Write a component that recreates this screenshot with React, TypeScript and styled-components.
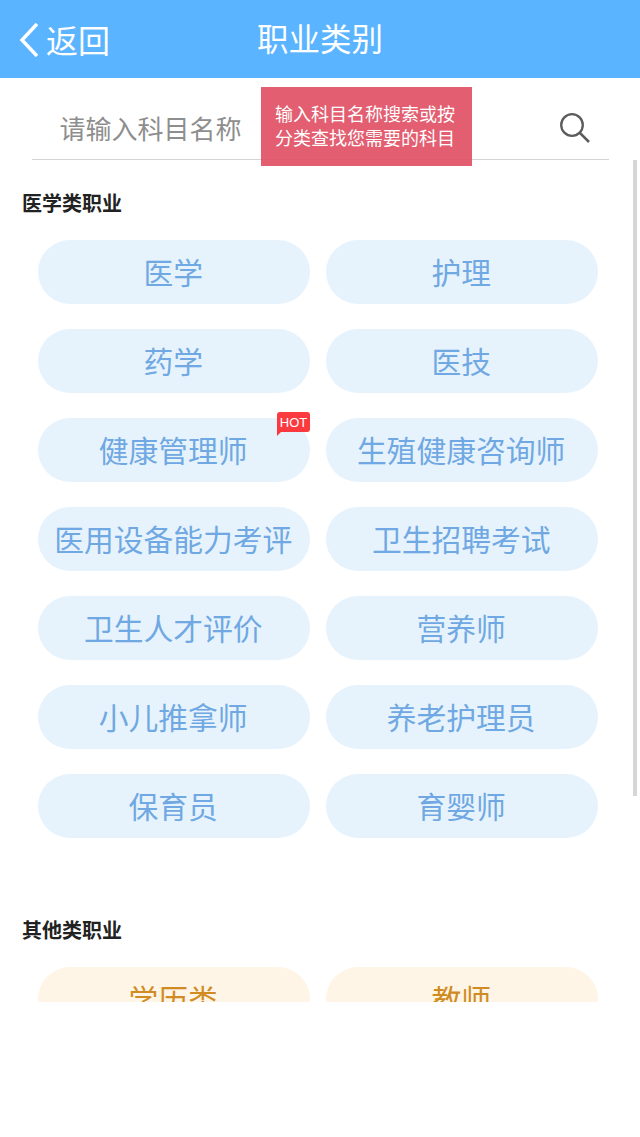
import React from "react";
import styled, { createGlobalStyle } from "styled-components";

const GlobalStyle = createGlobalStyle`
  html, body {
    margin: 0;
    padding: 0;
    background: #fff;
    font-family: "Noto Sans CJK SC", "Liberation Sans", sans-serif;
  }
  * { box-sizing: border-box; }
`;

const Page = styled.div`
  position: relative;
  width: 640px;
  height: 1137px;
  overflow: hidden;
  background: #fff;
`;

const Header = styled.header`
  display: grid;
  grid-template-columns: 1fr auto 1fr;
  align-items: center;
  height: 78px;
  padding: 0 18px;
  background: #5ab4ff;
  color: #fff;
`;

const Back = styled.div`
  display: flex;
  align-items: center;
  gap: 4px;
  font-size: 32px;
  line-height: 78px;
`;

const BackLabel = styled.span`
  height: 78px;
`;

const Title = styled.h1`
  margin: -4px 0 0;
  font-size: 31.5px;
  font-weight: 400;
  line-height: 78px;
`;

const SearchBar = styled.div`
  display: flex;
  align-items: center;
  justify-content: space-between;
  height: 82px;
  margin: 0 31px 0 32px;
  padding: 18px 18px 0 27.5px;
  border-bottom: 1px solid #d4d4d4;
`;

const Placeholder = styled.span`
  font-size: 26px;
  line-height: 1;
  color: #8e8e8e;
`;

const Tip = styled.div`
  position: absolute;
  top: 87px;
  left: 261px;
  width: 211px;
  height: 79px;
  padding: 14px 0 0 14px;
  background: rgba(224, 80, 100, 0.92);
  color: #fff;
  font-size: 18px;
  line-height: 24px;
  white-space: nowrap;
`;

const Scroller = styled.main`
  height: 842px;
  overflow: hidden;
  padding: 29px 42px 0 22px;
`;

const ScrollThumb = styled.div`
  position: absolute;
  top: 160px;
  left: 633px;
  width: 4px;
  height: 636px;
  background: #d6d6d6;
`;

const Section = styled.section`
  margin-bottom: 78px;
`;

const SectionTitle = styled.h2`
  margin: 0 0 23px;
  font-size: 20px;
  font-weight: 700;
  line-height: 28px;
  color: #222;
`;

const Pills = styled.div`
  display: grid;
  grid-template-columns: 272px 272px;
  gap: 25px 16px;
  margin-left: 16px;
`;

const Pill = styled.div<{ $warm?: boolean }>`
  position: relative;
  height: 64px;
  padding-right: 1.5px;
  border-radius: 32px;
  background: ${({ $warm }) => ($warm ? "#fff5e6" : "#e7f3fc")};
  color: ${({ $warm }) => ($warm ? "#d08c22" : "#6fa8e2")};
  font-size: 29.75px;
  line-height: 63px;
  text-align: center;
  white-space: nowrap;
`;

const HotBadge = styled.span`
  position: absolute;
  top: -6px;
  right: 0;
  width: 33px;
  height: 20px;
  border-radius: 3px 3px 3px 0;
  background: #fb3a3f;
  color: #fff;
  font-family: "Liberation Sans", sans-serif;
  font-size: 13px;
  line-height: 21px;
  text-align: center;

  &::after {
    content: "";
    position: absolute;
    top: 20px;
    left: 0;
    border-top: 4px solid #fb3a3f;
    border-right: 4px solid transparent;
  }
`;

const medical = [
  "医学",
  "护理",
  "药学",
  "医技",
  "健康管理师",
  "生殖健康咨询师",
  "医用设备能力考评",
  "卫生招聘考试",
  "卫生人才评价",
  "营养师",
  "小儿推拿师",
  "养老护理员",
  "保育员",
  "育婴师",
];

const other = ["学历类", "教师"];

const App: React.FC = () => {
  return (
    <Page>
      <GlobalStyle />
      <Header>
        <Back>
          <svg width="24" height="36" viewBox="0 0 24 36" fill="none">
            <path d="M19 3 L4 19 L19 35" stroke="#fff" strokeWidth="3.5" />
          </svg>
          <BackLabel>返回</BackLabel>
        </Back>
        <Title>职业类别</Title>
        <span />
      </Header>
      <SearchBar>
        <Placeholder>请输入科目名称</Placeholder>
        <svg width="32" height="32" viewBox="0 0 32 32" fill="none">
          <circle cx="13" cy="13" r="10.8" stroke="#5c5c5c" strokeWidth="2.3" />
          <path d="M21 21 L30 30" stroke="#5c5c5c" strokeWidth="2.5" />
        </svg>
      </SearchBar>
      <Tip>
        输入科目名称搜索或按
        <br />
        分类查找您需要的科目
      </Tip>
      <Scroller>
        <Section>
          <SectionTitle>医学类职业</SectionTitle>
          <Pills>
            {medical.map((name) => (
              <Pill key={name}>
                {name}
                {name === "健康管理师" && <HotBadge>HOT</HotBadge>}
              </Pill>
            ))}
          </Pills>
        </Section>
        <Section>
          <SectionTitle>其他类职业</SectionTitle>
          <Pills>
            {other.map((name) => (
              <Pill key={name} $warm>
                {name}
              </Pill>
            ))}
          </Pills>
        </Section>
      </Scroller>
      <ScrollThumb />
    </Page>
  );
};

export default App;
